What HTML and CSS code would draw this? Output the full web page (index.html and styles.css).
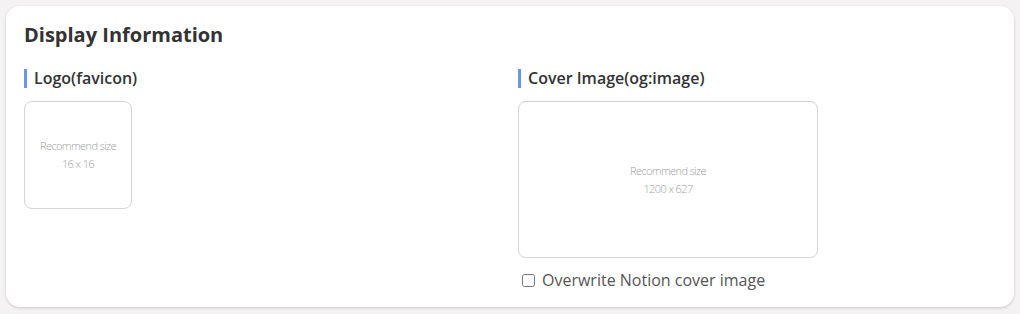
FILE: index.html
```html
<!DOCTYPE html>
<html lang="en">
<head>
    <meta charset="UTF-8">
    <meta name="viewport" content="width=device-width, initial-scale=1.0">
    <title>Display Information</title>
    <link rel="stylesheet" href="styles.css">
</head>
<body>
    <div class="card">
        <h2 class="card-title">Display Information</h2>
        <div class="fields">
            <div class="field">
                <div class="field-label">Logo(favicon)</div>
                <div class="upload upload-logo">
                    <span>Recommend size</span>
                    <span>16 x 16</span>
                </div>
            </div>
            <div class="field">
                <div class="field-label">Cover Image(og:image)</div>
                <div class="upload upload-cover">
                    <span>Recommend size</span>
                    <span>1200 x 627</span>
                </div>
                <label class="check">
                    <input type="checkbox">
                    <span>Overwrite Notion cover image</span>
                </label>
            </div>
        </div>
    </div>
</body>
</html>
```

FILE: styles.css
```css
body {
    margin: 0;
    padding: 6px;
    background-color: #f4f2f2;
    font-family: "Open Sans", sans-serif;
    color: #333;
}
.card {
    background-color: #fff;
    border-radius: 14px;
    box-shadow: 0 1px 3px rgba(0, 0, 0, 0.18);
    padding: 18px 18px 14px 18px;
    height: 301px;
    box-sizing: border-box;
}
.card-title {
    margin: 0;
    font-size: 20px;
    font-weight: 700;
    line-height: 22px;
    color: #333;
}
.fields {
    display: grid;
    grid-template-columns: 1fr 1fr;
    column-gap: 16px;
    margin-top: 23px;
}
.field-label {
    border-left: 3px solid #6d95e6;
    padding-left: 7px;
    font-size: 16px;
    font-weight: 600;
    line-height: 19px;
    color: #333;
}
.upload {
    margin-top: 13px;
    border: 1px solid #d4d4d4;
    border-radius: 8px;
    box-sizing: border-box;
    display: flex;
    flex-direction: column;
    align-items: center;
    justify-content: center;
    font-size: 11px;
    font-weight: 300;
    letter-spacing: -0.6px;
    line-height: 18px;
    color: #a0a0a0;
}
.upload-logo {
    width: 108px;
    height: 108px;
}
.upload-cover {
    width: 300px;
    height: 157px;
}
.check {
    display: flex;
    align-items: center;
    gap: 7px;
    margin-top: 11px;
    padding-left: 4px;
    font-size: 16px;
    color: #555;
}
.check input {
    margin: 0;
    width: 13px;
    height: 13px;
}
```
